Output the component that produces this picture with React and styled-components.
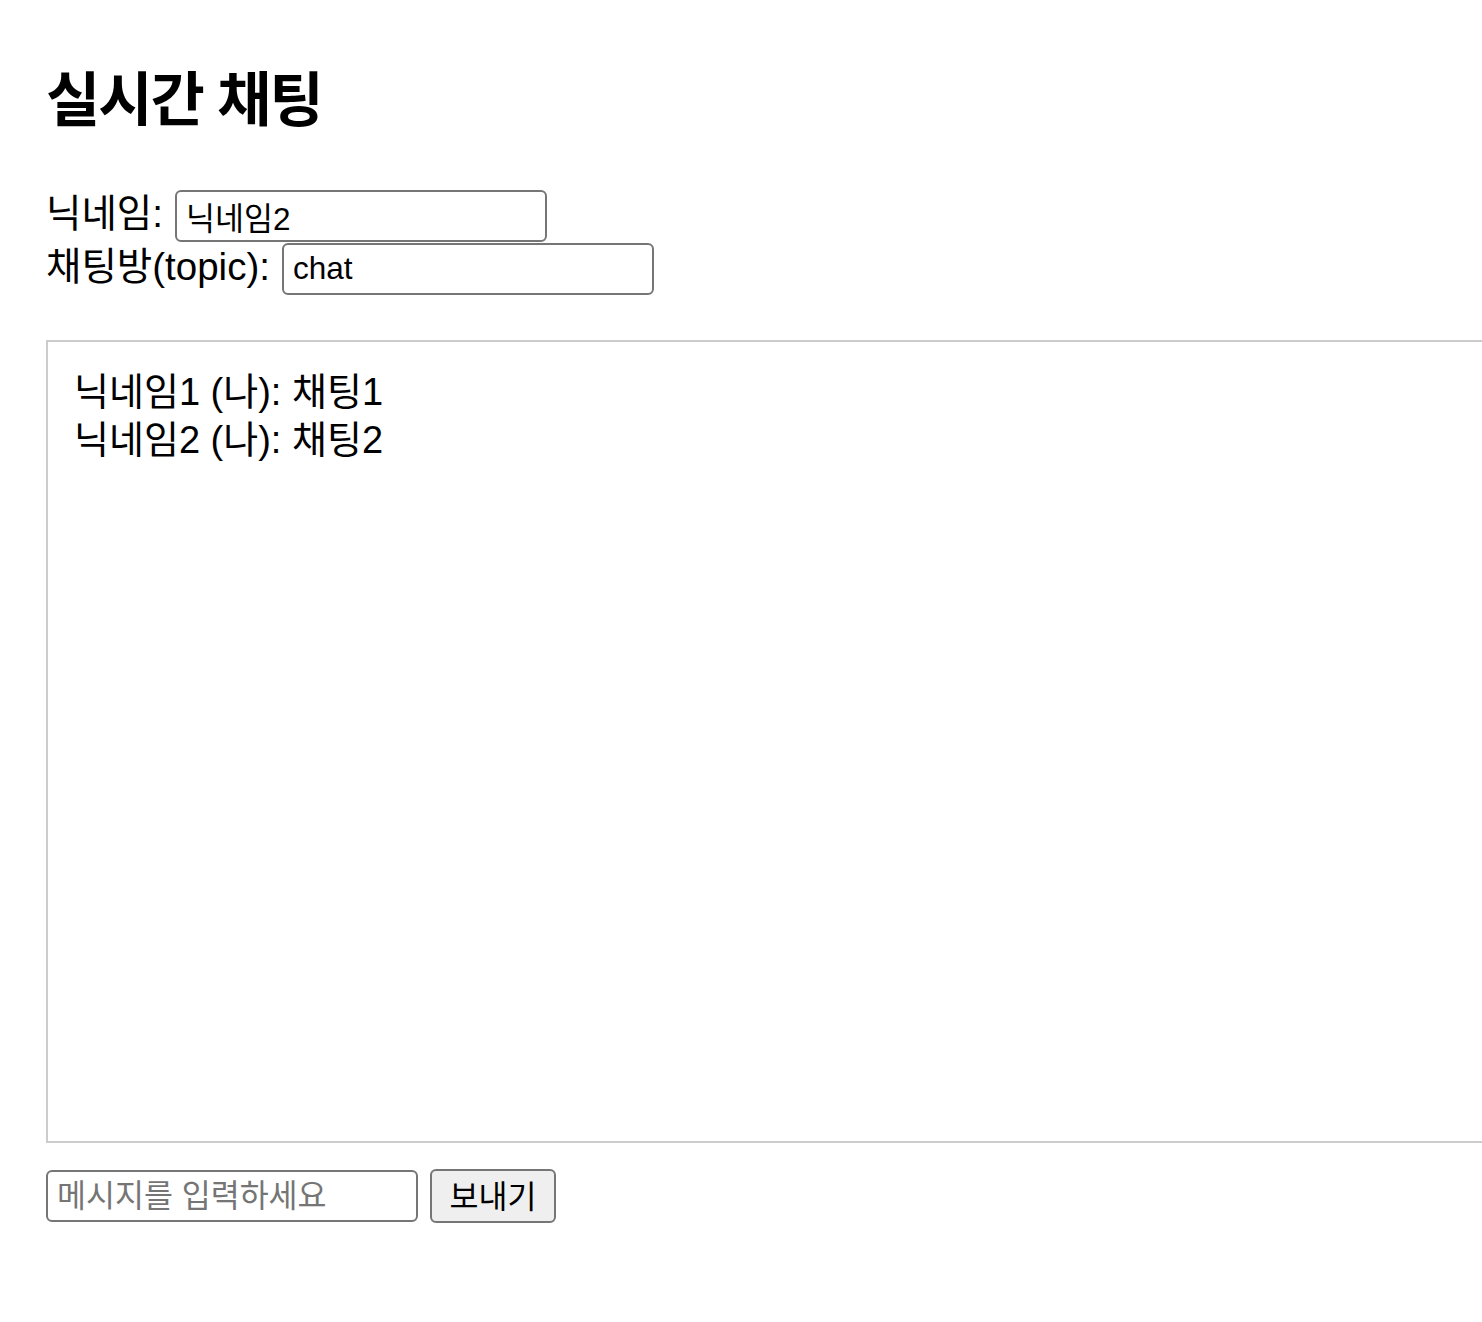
import React, { useState } from 'react';
import styled, { createGlobalStyle } from 'styled-components';

const GlobalStyle = createGlobalStyle`
  html, body {
    margin: 0;
    padding: 0;
    background: #fff;
    overflow-x: hidden;
  }
  body {
    font-family: 'Liberation Sans', 'Noto Sans CJK KR', sans-serif;
    color: #000;
  }
`;

const Page = styled.div`
  padding: 61px 0 0 46px;
`;

const Title = styled.h1`
  margin: 0 0 48px;
  font-size: 59px;
  font-weight: 700;
  line-height: 80px;
  letter-spacing: -2px;
`;

const Field = styled.div`
  display: flex;
  align-items: center;
  height: 53px;
  font-size: 38.5px;
  line-height: 53px;
`;

const Label = styled.label`
  margin-right: 12px;
  padding-bottom: 4px;
  white-space: nowrap;
`;

const TextInput = styled.input`
  box-sizing: border-box;
  width: 372px;
  height: 52px;
  padding: 0 9px;
  border: 2px solid #767676;
  border-radius: 6px;
  font-family: 'Liberation Sans', 'Noto Sans CJK KR', sans-serif;
  font-size: 31.5px;
  color: #000;
  background: #fff;
  outline: none;

  &::placeholder {
    color: #757575;
  }
`;

const ChatBox = styled.div`
  box-sizing: border-box;
  width: 1500px;
  height: 803px;
  margin-top: 45px;
  padding: 26px 26px;
  border: 2px solid #ccc;
`;

const Message = styled.div`
  font-size: 38px;
  line-height: 48px;
`;

const Composer = styled.div`
  display: flex;
  align-items: center;
  gap: 12px;
  margin-top: 26px;
`;

const SendButton = styled.button`
  box-sizing: border-box;
  width: 126px;
  height: 54px;
  border: 2px solid #767676;
  border-radius: 6px;
  background: #efefef;
  font-family: 'Liberation Sans', 'Noto Sans CJK KR', sans-serif;
  font-size: 31.5px;
  color: #000;
  padding: 0 0 4px;
`;

export default function App() {
  const [nickname, setNickname] = useState('닉네임2');
  const [topic, setTopic] = useState('chat');
  const [text, setText] = useState('');
  const messages = [
    { nick: '닉네임1', body: '채팅1' },
    { nick: '닉네임2', body: '채팅2' },
  ];

  return (
    <>
      <GlobalStyle />
      <Page>
        <Title>실시간 채팅</Title>
        <Field>
          <Label>닉네임:</Label>
          <TextInput value={nickname} onChange={e => setNickname(e.target.value)} />
        </Field>
        <Field>
          <Label>채팅방(topic):</Label>
          <TextInput value={topic} onChange={e => setTopic(e.target.value)} />
        </Field>
        <ChatBox>
          {messages.map((m, i) => (
            <Message key={i}>{m.nick} (나): {m.body}</Message>
          ))}
        </ChatBox>
        <Composer>
          <TextInput
            placeholder="메시지를 입력하세요"
            value={text}
            onChange={e => setText(e.target.value)}
          />
          <SendButton>보내기</SendButton>
        </Composer>
      </Page>
    </>
  );
}
